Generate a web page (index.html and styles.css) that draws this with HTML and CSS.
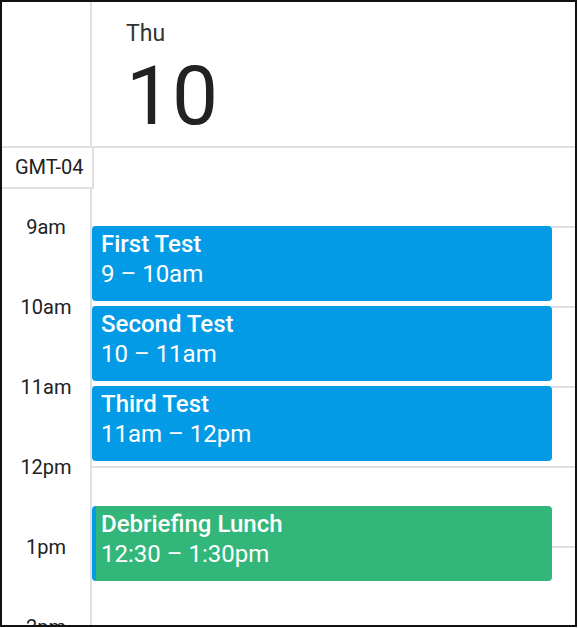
FILE: index.html
```html
<!DOCTYPE html>
<html>
<head>
<meta charset="utf-8">
<link rel="stylesheet" href="styles.css">
</head>
<body>
<div class="frame">
  <div class="header">
    <div class="corner"></div>
    <div class="dayhead">
      <div class="dow">Thu</div>
      <div class="date">10</div>
    </div>
  </div>
  <div class="body">
    <div class="gutter">
      <div class="tz">GMT-04</div>
      <div class="gap"></div>
      <div class="hour"><span>9am</span></div>
      <div class="hour"><span>10am</span></div>
      <div class="hour"><span>11am</span></div>
      <div class="hour"><span>12pm</span></div>
      <div class="hour"><span>1pm</span></div>
      <div class="hour"><span>2pm</span></div>
    </div>
    <div class="day">
      <div class="dgap"></div>
      <div class="slot"></div>
      <div class="slot"></div>
      <div class="slot"></div>
      <div class="slot"></div>
      <div class="slot"></div>
      <div class="slot"></div>
      <div class="event blue" style="top:78px"><div class="title">First Test</div><div class="time">9 – 10am</div></div>
      <div class="event blue" style="top:158px"><div class="title">Second Test</div><div class="time">10 – 11am</div></div>
      <div class="event blue" style="top:238px"><div class="title">Third Test</div><div class="time">11am – 12pm</div></div>
      <div class="event green" style="top:358px"><div class="title">Debriefing Lunch</div><div class="time">12:30 – 1:30pm</div></div>
    </div>
  </div>
</div>
</body>
</html>
```
FILE: styles.css
```css
* { box-sizing: border-box; }
html, body { margin: 0; padding: 0; background: #fff; }
body { font-family: Roboto, "Noto Sans", sans-serif; color: #222; }
.frame {
  width: 577px;
  height: 627px;
  border: 2px solid #111;
  overflow: hidden;
  display: flex;
  flex-direction: column;
}
.header {
  display: flex;
  height: 146px;
  flex: none;
  border-bottom: 2px solid #e0e0e0;
}
.corner {
  width: 90px;
  border-right: 2px solid #e0e0e0;
}
.dayhead {
  padding-left: 34px;
  padding-top: 19px;
}
.dow {
  font-size: 23px;
  line-height: 26px;
  color: #333;
}
.date {
  font-size: 82px;
  line-height: 82px;
  margin-top: 8px;
  color: #222;
}
.body {
  display: flex;
  flex: 1;
  min-height: 0;
}
.gutter {
  width: 90px;
  flex: none;
  border-right: 2px solid #e0e0e0;
  display: flex;
  flex-direction: column;
}
.tz {
  height: 41px;
  width: 92px;
  margin-right: -2px;
  border-right: 2px solid #e0e0e0;
  border-bottom: 2px solid #e0e0e0;
  background: #fff;
  position: relative;
  z-index: 1;
  font-size: 20px;
  line-height: 39px;
  padding-left: 13px;
}
.gap { height: 37px; flex: none; }
.hour {
  height: 80px;
  flex: none;
  text-align: center;
  font-size: 20px;
}
.hour span {
  display: block;
  line-height: 22px;
  margin-top: -10px;
}
.day {
  flex: 1;
  position: relative;
  display: flex;
  flex-direction: column;
}
.dgap { height: 78px; flex: none; }
.slot {
  height: 80px;
  flex: none;
  border-top: 2px solid #e0e0e0;
}
.event {
  position: absolute;
  left: 0;
  width: 460px;
  height: 75px;
  border-radius: 4px;
  color: #fff;
  padding: 3px 0 0 9px;
  font-size: 24px;
}
.blue { background: #039be5; }
.green { background: #33b679; border-left: 4px solid #039be5; padding-left: 5px; }
.title { font-weight: 500; line-height: 30px; }
.time { line-height: 30px; }
```
